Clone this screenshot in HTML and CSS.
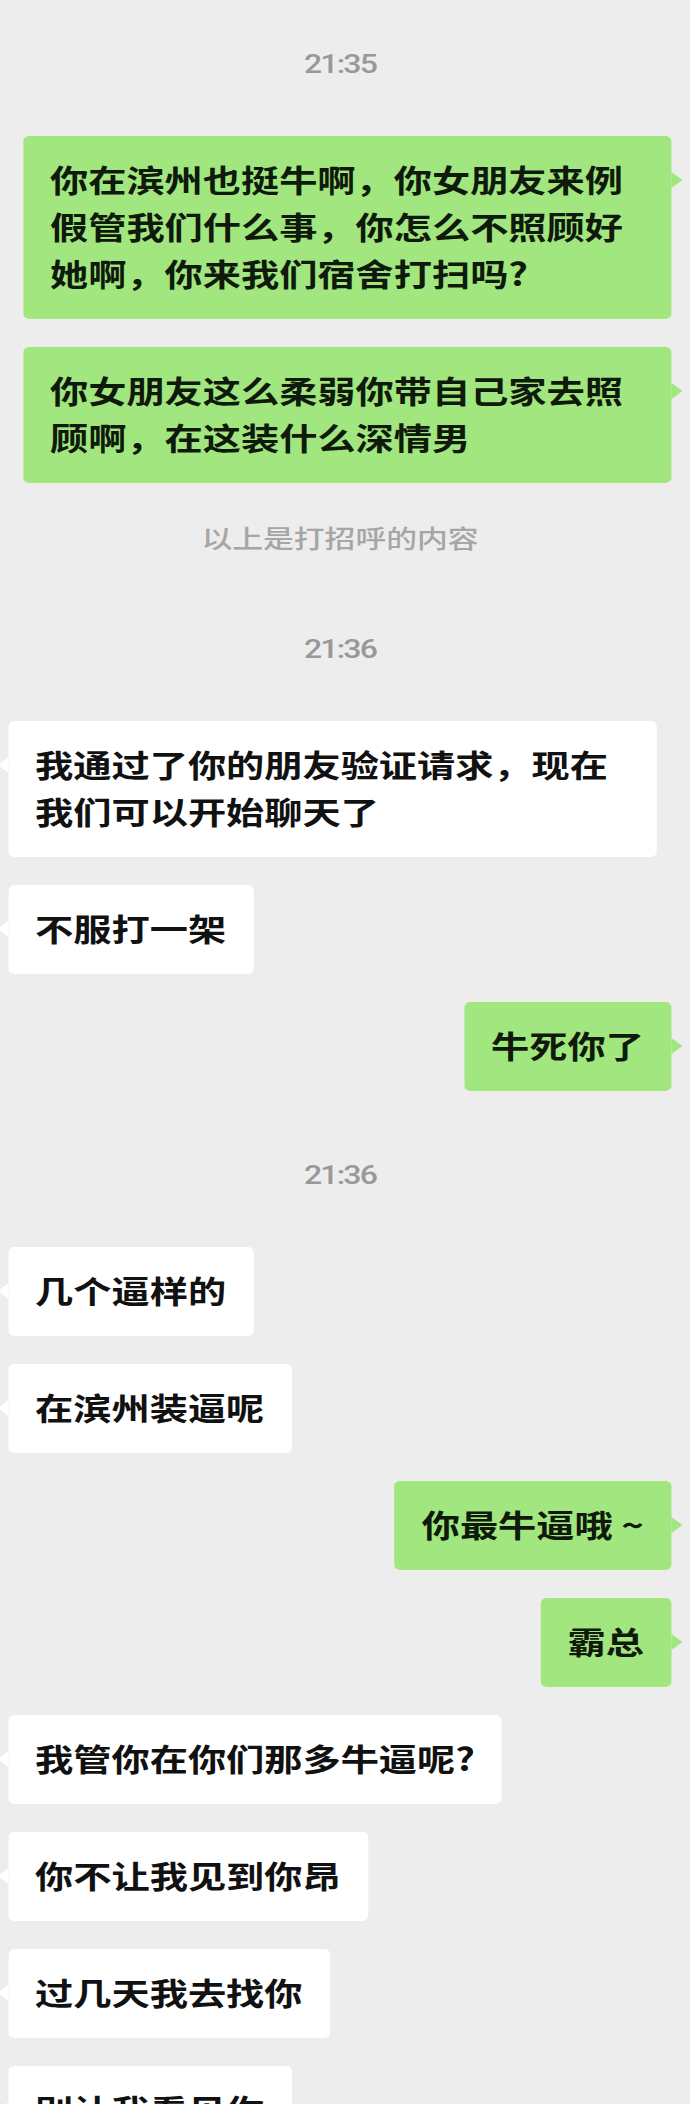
FILE: index.html
```html
<!DOCTYPE html>
<html lang="zh-CN">
<head>
<meta charset="utf-8">
<title>聊天记录</title>
<link rel="stylesheet" href="styles.css">
</head>
<body>
<main class="screen">
  <div class="time time-first">21:35</div>
  <div class="row row-me"><div class="bubble bubble-me">你在滨州也挺牛啊，你女朋友来例假管我们什么事，你怎么不照顾好她啊，你来我们宿舍打扫吗?</div></div>
  <div class="row row-me"><div class="bubble bubble-me">你女朋友这么柔弱你带自己家去照顾啊，在这装什么深情男</div></div>
  <div class="sys">以上是打招呼的内容</div>
  <div class="time">21:36</div>
  <div class="row row-other"><div class="bubble bubble-other">我通过了你的朋友验证请求，现在我们可以开始聊天了</div></div>
  <div class="row row-other"><div class="bubble bubble-other">不服打一架</div></div>
  <div class="row row-me"><div class="bubble bubble-me">牛死你了</div></div>
  <div class="time">21:36</div>
  <div class="row row-other"><div class="bubble bubble-other">几个逼样的</div></div>
  <div class="row row-other"><div class="bubble bubble-other">在滨州装逼呢</div></div>
  <div class="row row-me"><div class="bubble bubble-me">你最牛逼哦 ~</div></div>
  <div class="row row-me"><div class="bubble bubble-me">霸总</div></div>
  <div class="row row-other"><div class="bubble bubble-other">我管你在你们那多牛逼呢?</div></div>
  <div class="row row-other"><div class="bubble bubble-other">你不让我见到你昂</div></div>
  <div class="row row-other"><div class="bubble bubble-other">过几天我去找你</div></div>
  <div class="row row-other"><div class="bubble bubble-other">别让我看见你</div></div>
</main>
</body>
</html>
```

FILE: styles.css
```css
html, body {
  margin: 0;
  padding: 0;
  background: #ededed;
}

body {
  overflow: hidden;
  height: 2104px;
}

.screen {
  width: 560px;
  display: flex;
  flex-direction: column;
  transform: scaleX(1.232);
  transform-origin: 0 0;
  font-family: "Noto Sans CJK SC", "Noto Sans", sans-serif;
  color: #111;
}

.time {
  margin: 64px 0 24px;
  padding-right: 8px;
  height: 40px;
  line-height: 40px;
  text-align: center;
  font-family: Roboto, "Noto Sans", sans-serif;
  font-size: 26px;
  font-weight: 500;
  letter-spacing: -1.5px;
  color: #999999;
}

.time-first {
  margin-top: 44px;
}

.sys {
  margin: 34px 0 8px;
  padding-right: 8px;
  height: 40px;
  line-height: 40px;
  text-align: center;
  font-size: 25px;
  font-weight: 500;
  color: #a6a6a6;
}

.row {
  display: flex;
  margin-top: 28px;
}

.row-me {
  justify-content: flex-end;
  padding-right: 15.4px;
}

.row-other {
  justify-content: flex-start;
  padding-left: 6.5px;
}

.bubble {
  position: relative;
  box-sizing: border-box;
  max-width: 526px;
  padding: 19px 22px 23px;
  font-size: 31px;
  line-height: 47px;
  font-weight: 700;
  border-radius: 5px;
}

.bubble-me {
  background: #a1e67e;
  color: #0f1a0c;
}

.bubble-other {
  background: #ffffff;
}

.bubble-me::after {
  content: "";
  position: absolute;
  right: -9px;
  top: 36px;
  border-left: 9px solid #a1e67e;
  border-top: 8px solid transparent;
  border-bottom: 8px solid transparent;
}

.bubble-other::before {
  content: "";
  position: absolute;
  left: -9px;
  top: 36px;
  border-right: 9px solid #ffffff;
  border-top: 8px solid transparent;
  border-bottom: 8px solid transparent;
}
```
